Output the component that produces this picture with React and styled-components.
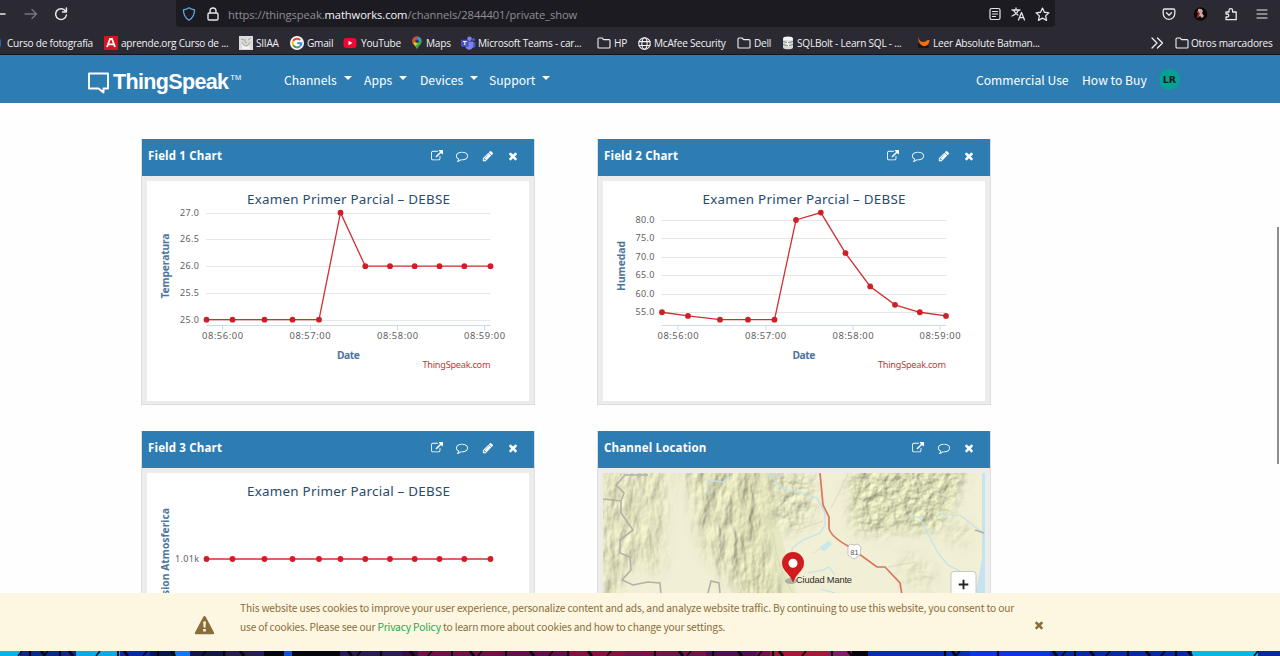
import React from 'react';
import styled, { createGlobalStyle } from 'styled-components';

const Global = createGlobalStyle`
  *, *::before, *::after { box-sizing: border-box; }
  html, body { margin: 0; padding: 0; background: #fff; overflow: hidden; }
  svg { display: block; flex: none; }
`;

const ui = '"Open Sans", "Noto Sans", sans-serif';
const source = '"Noto Sans CJK JP", "Noto Sans", sans-serif';
const chartFont = '"Noto Sans", sans-serif';

const Screen = styled.div`
  position: relative;
  display: flex;
  flex-direction: column;
  width: 1280px;
  height: 656px;
  overflow: hidden;
  background: #fefefe;
`;

/* Browser chrome */
const Toolbar = styled.div`
  display: flex;
  flex: none;
  height: 28px;
  background: #2b2a33;
`;
const ToolGroup = styled.div`
  display: flex;
  align-items: center;
  width: ${(p) => p.$w}px;
  padding-left: ${(p) => p.$left || 0}px;
  gap: ${(p) => p.$gap}px;
  color: #e8e8ec;
`;
const AddressBar = styled.div`
  display: flex;
  align-items: center;
  width: 879px;
  height: 27px;
  padding: 1px 5px 0 6px;
  border-radius: 0 0 4px 4px;
  background: #1c1b22;
  color: #e4e4e8;
`;
const Lock = styled.div`
  margin-left: 10px;
`;
const Url = styled.div`
  flex: 1;
  margin: 2px 0 0 8px;
  font: 11.2px/16px ${ui};
  letter-spacing: -0.09px;
  color: #8e8d96;
  white-space: nowrap;
  b { font-weight: 400; color: #f4f4f7; }
`;
const AddressActions = styled.div`
  display: flex;
  align-items: center;
  gap: 9px;
`;
const Bookmarks = styled.div`
  display: flex;
  flex: none;
  align-items: center;
  height: 27px;
  padding-top: 4px;
  background: #2b2a33;
  border-bottom: 1px solid #10161f;
  font: 10.1px/16px ${ui};
  letter-spacing: -0.24px;
  color: #f0f0f3;
`;
const Bookmark = styled.div`
  display: flex;
  align-items: center;
  flex: none;
  width: ${(p) => p.$w}px;
  white-space: nowrap;
`;
const Glyph = styled.span`
  display: flex;
  flex: none;
  width: ${(p) => p.$w || 17}px;
`;

/* Site navigation */
const Nav = styled.nav`
  display: flex;
  flex: none;
  align-items: center;
  height: 48px;
  padding: 1px 0 0 87px;
  background: #2e7db2;
  color: #fff;
  font: 12.15px/20px ${source};
`;
const Logo = styled.div`
  display: flex;
  align-items: center;
  width: 197px;
  padding-top: 6px;
`;
const Wordmark = styled.span`
  margin: -2px 0 0 3px;
  font: bold 21.5px/24px "Liberation Sans", Arial, sans-serif;
  letter-spacing: -0.65px;
`;
const Trademark = styled.span`
  margin: -10px 0 0 2px;
  font: 7.5px/8px "Liberation Sans", Arial, sans-serif;
`;
const NavItem = styled.div`
  display: flex;
  align-items: center;
  gap: 7px;
  flex: none;
  width: ${(p) => p.$w}px;
  white-space: nowrap;
`;
const Caret = styled.i`
  margin-top: -3px;
  border: 4px solid transparent;
  border-top-color: #fff;
  border-bottom: 0;
`;
const Avatar = styled.div`
  width: 21px;
  height: 21px;
  border-radius: 50%;
  margin-top: -1px;
  background: #08a195;
  color: #0b1c22;
  text-align: center;
  font: bold 9.5px/21px "DejaVu Sans", sans-serif;
`;

/* Channel widgets */
const Page = styled.main`
  display: grid;
  flex: none;
  align-content: start;
  grid-template-columns: 394px 394px;
  grid-auto-rows: 266px;
  gap: 26px 62px;
  height: 490px;
  padding: 36px 0 0 141px;
  overflow: hidden;
`;
const Card = styled.section`
  background: #ececec;
  border: solid #dedede;
  border-width: 0 1px 1px;
`;
const CardHeader = styled.header`
  display: flex;
  align-items: center;
  justify-content: space-between;
  height: 37px;
  padding: 0 15px 3px 6px;
  background: #2e7db2;
  color: #fff;
`;
const CardTitle = styled.h2`
  margin: 0;
  font: bold 11.5px/16px ${ui};
  letter-spacing: 0.16px;
`;
const CardTools = styled.div`
  display: flex;
  align-items: center;
  gap: 13.4px;
`;
const CardBody = styled.div`
  margin: 5px 5px 4px;
  height: 220px;
  overflow: hidden;
  background: #fff;
`;

/* Cookie notice */
const Notice = styled.aside`
  display: flex;
  flex: none;
  align-items: center;
  height: 58px;
  padding-left: 194px;
  background: #fdf7e2;
  color: #8a6d3b;
`;
const NoticeText = styled.p`
  flex: none;
  width: 779px;
  margin: -9px 0 0 25px;
  font: 10.2px/18.5px ${source};
  letter-spacing: -0.15px;
  white-space: nowrap;
  a { color: #1fa84a; }
`;
const WarnWrap = styled.div`
  padding-top: 5px;
`;
const CloseWrap = styled.div`
  margin: 6px 0 0 14px;
`;
const Wallpaper = styled.footer`
  flex: none;
  height: 5px;
`;
const ScrollThumb = styled.div`
  position: absolute;
  top: 227px;
  right: 1px;
  width: 2px;
  height: 237px;
  background: #8e8e8e;
`;

const FA = {
  link: 'M1408 928v320q0 119-84.5 203.5t-203.5 84.5h-832q-119 0-203.5-84.5t-84.5-203.5v-832q0-119 84.5-203.5t203.5-84.5h704q14 0 23 9t9 23v64q0 14-9 23t-23 9h-704q-66 0-113 47t-47 113v832q0 66 47 113t113 47h832q66 0 113-47t47-113v-320q0-14 9-23t23-9h64q14 0 23 9t9 23zm384-864v512q0 26-19 45t-45 19-45-19l-176-176-652 652q-10 10-23 10t-23-10l-114-114q-10-10-10-23t10-23l652-652-176-176q-19-19-19-45t19-45 45-19h512q26 0 45 19t19 45z',
  comment: 'M896 384q-204 0-381.5 69.5t-282 187.5-104.5 255q0 112 71.5 213.5t201.5 175.5l87 50-27 96q-24 91-70 172 152-63 275-171l43-38 57 6q69 8 130 8 204 0 381.5-69.5t282-187.5 104.5-255-104.5-255-282-187.5-381.5-69.5zm896 512q0 174-120 321.5t-326 233-450 85.5q-70 0-145-8-198 175-460 242-49 14-114 22h-5q-15 0-27-10.5t-16-27.5v-1q-3-4-.5-12t2-10 4.5-9.5l6-9 7-8.5 8-9q7-8 31-34.5t34.5-38 31-39.5 32.5-51 27-59 26-76q-157-89-247.5-220t-90.5-281q0-174 120-321.5t326-233 450-85.5 450 85.5 326 233 120 321.5z',
  pencil: 'M491 1536l91-91-235-235-91 91v107h128v128h107zm523-928q0-22-22-22-10 0-17 7l-542 542q-7 7-7 17 0 22 22 22 10 0 17-7l542-542q7-7 7-17zm-54-192l416 416-832 832h-416v-416zm683 96q0 53-37 90l-166 166-416-416 166-165q36-38 90-38 53 0 91 38l235 234q37 39 37 91z',
  times: 'M1490 1322q0 40-28 68l-136 136q-28 28-68 28t-68-28l-294-294-294 294q-28 28-68 28t-68-28l-136-136q-28-28-28-68t28-68l294-294-294-294q-28-28-28-68t28-68l136-136q28-28 68-28t68 28l294 294 294-294q28-28 68-28t68 28l136 136q28 28 28 68t-28 68l-294 294 294 294q28 28 28 68z',
};
const FaIcon = ({ name, size = 12 }) => (
  <svg width={size} height={size} viewBox="0 0 1792 1792" fill="currentColor"><path d={FA[name]} /></svg>
);

const Line = ({ w = 14, h = 14, vb = '0 0 14 14', sw = 1.3, color = 'currentColor', children }) => (
  <svg width={w} height={h} viewBox={vb} fill="none" stroke={color} strokeWidth={sw} strokeLinecap="round" strokeLinejoin="round">{children}</svg>
);

const Folder = () => (
  <Line sw={1.1}><path d="M1 11V3q0-1 1-1h3l1.6 1.6H12q1 0 1 1V11q0 1-1 1H2q-1 0-1-1Z" /></Line>
);
const bookmarkIcons = {
  aprende: (
    <svg width="14" height="14"><rect width="14" height="14" rx="1" fill="#d8151f" /><path d="M3 11 6 3h2l3 8M4.5 8.3h5" stroke="#fff" strokeWidth="1.8" fill="none" /></svg>
  ),
  siiaa: (
    <svg width="14" height="14"><rect width="14" height="14" fill="#dcdcda" /><path d="M2 3l3 1M9 4l3-2M3 6q4 8 8 0M6 3v3l2 1" stroke="#a2a2a2" fill="none" /><path d="M3 8q2 4 7 2l1 3H3z" fill="#f4f4f4" /></svg>
  ),
  gmail: (
    <svg width="14" height="14" viewBox="0 0 14 14"><circle cx="7" cy="7" r="7" fill="#fff" /><g fill="none" strokeWidth="2"><path d="M10.2 4A4.4 4.4 0 0 0 3.2 4.9" stroke="#ea4335" /><path d="M3.2 4.9a4.4 4.4 0 0 0 0 4.3" stroke="#fbbc05" /><path d="M3.2 9.2a4.4 4.4 0 0 0 6.8 1" stroke="#34a853" /><path d="M10 10.2A4.2 4.2 0 0 0 11.4 7.2H7.2" stroke="#4285f4" /></g></svg>
  ),
  youtube: (
    <svg width="14" height="14"><rect x=".5" y="2" width="13" height="10" rx="3" fill="#f20732" /><path d="m5.5 4.7 4 2.3-4 2.3z" fill="#fff" /></svg>
  ),
  maps: (
    <svg width="12" height="14" viewBox="0 0 12 14"><path d="M6 .5A4.8 4.8 0 0 0 1.2 5.2C1.2 8.5 5 10 6 13.5 7 10 10.8 8.5 10.8 5.2A4.8 4.8 0 0 0 6 .5Z" fill="#34a853" /><path d="M1.2 5.2A4.8 4.8 0 0 1 6 .5l1.5.3-5.2 6.8q-1.1-1.2-1.1-2.4Z" fill="#ea4335" /><path d="M6 .5q3 0 4.2 2.5L6.8 7 5 4.3 7.5 1Z" fill="#4285f4" /><path d="m2.3 7.6 2.2-2.5 2.8 1.8-3 3Z" fill="#fbbc04" /><circle cx="6" cy="5.2" r="1.7" fill="#1f3a5a" /></svg>
  ),
  teams: (
    <svg width="15" height="14" viewBox="0 0 15 14"><circle cx="8.5" cy="2.7" r="2.3" fill="#7b83eb" /><circle cx="12.5" cy="3.6" r="1.5" fill="#5059c9" /><path d="M10 6h4.4v4q-.5 2.5-3.3 2Z" fill="#5059c9" /><path d="M5 5.5h7V10q-.5 3.8-3.8 3.8T4.5 10Z" fill="#7b83eb" /><rect y="3.7" width="7.6" height="7" rx=".7" fill="#4b53bc" /><path d="M2 5.5h3.7M3.8 5.5V9" stroke="#fff" /></svg>
  ),
  folder: <Folder />,
  globe: (
    <Line w={13} h={13} sw={1.2}><circle cx="7" cy="7" r="6.2" /><ellipse cx="7" cy="7" rx="2.8" ry="6.2" /><path d="M1 5h12M1 9.2h12" /></Line>
  ),
  sql: (
    <svg width="12" height="14" viewBox="0 0 12 14"><path d="M1 2.500v9q0 1.800 5 1.800t5-1.800v-9Z" fill="#d5d9d6" /><ellipse cx="6" cy="2.500" rx="5" ry="2" fill="#f4f4f0" /><path d="M1 5.500q5 2.400 10 0M1 8.500q5 2.400 10 0" stroke="#7d8587" strokeWidth=".9" fill="none" /><path d="m6.500 5-2 3h2.500l-1 3" stroke="#fff" fill="none" /></svg>
  ),
  batman: (
    <svg width="14" height="14" viewBox="0 0 14 14"><path d="M1 8h9l2 4H1z" fill="#17161b" /><path d="M1 1q1.500 5 5 5 3 0 4.500-2h2q0 3-2 5-2.500 2-5.500.5Q1.500 7.500 1 1Z" fill="#f2700d" /></svg>
  ),
};

const bookmarks = [
  { icon: 'aprende', label: 'aprende.org Curso de ...', w: 135 },
  { icon: 'siiaa', label: 'SIIAA', w: 51 },
  { icon: 'gmail', label: 'Gmail', w: 53 },
  { icon: 'youtube', label: 'YouTube', w: 68, g: 18 },
  { icon: 'maps', label: 'Maps', w: 50, g: 15 },
  { icon: 'teams', label: 'Microsoft Teams - car...', w: 136 },
  { icon: 'folder', label: 'HP', w: 41 },
  { icon: 'globe', label: 'McAfee Security', w: 99, g: 16 },
  { icon: 'folder', label: 'Dell', w: 45 },
  { icon: 'sql', label: 'SQLBolt - Learn SQL - ...', w: 135, g: 15 },
  { icon: 'batman', label: 'Leer Absolute Batman...', w: 234, g: 16 },
];

const xs = [59.5, 85.5, 117.5, 145.5, 172, 193.5, 218.3, 243, 267.7, 292.5, 317.3, 343.5];
const times = [['08:56:00', 75.5], ['08:57:00', 163], ['08:58:00', 250.5], ['08:59:00', 337.5]];

function Chart({ axis, axisY, axisLen, ys, ticks, shift = 0, timeAxis = true }) {
  return (
    <svg width="382" height="220" viewBox="0 0 382 220" fontFamily={chartFont}>
      <text x={201.5 + shift} y="23" fontSize="13.400" fill="#274b6d" textAnchor="middle" textLength="203">Examen Primer Parcial – DEBSE</text>
      <g transform={`translate(${shift} 0)`}>
        {ticks.map(([label, y, len = 19]) => (
          <g key={label}>
            {timeAxis && <path d={`M59 ${Math.round(y) + 0.5}H343.500`} stroke="#e6e6e6" />}
            <text x="52" y={y + 3} fontSize="9" fill="#5f5f5f" textAnchor="end" textLength={len}>{label}</text>
          </g>
        ))}
        {timeAxis && (
          <>
            <path d="M59 144.500H343.500" stroke="#c9dbea" />
            {times.map(([t, x]) => (
              <g key={t}>
                <path d={`M${Math.floor(x) + 0.5} 144v5`} stroke="#c9dbea" />
                <text x={x} y="158" fontSize="9.400" fill="#5f5f5f" textAnchor="middle" textLength="41">{t}</text>
              </g>
            ))}
            <text x="201.500" y="178" fontSize="10.300" fontWeight="bold" fill="#4d759e" textAnchor="middle" textLength="23">Date</text>
            <text x="343.500" y="187" fontSize="9.200" fill="#cc3339" textAnchor="end" textLength="68">ThingSpeak.com</text>
          </>
        )}
        <polyline points={ys.map((y, i) => `${xs[i]},${y}`).join(' ')} fill="none" stroke="#cf3032" strokeWidth="1.300" />
        {ys.map((y, i) => <circle key={i} cx={xs[i]} cy={y} r="2.900" fill="#cd2026" />)}
      </g>
      <text transform={`translate(22 ${axisY}) rotate(-90)`} fontSize="10.300" fontWeight="bold" fill="#4d759e" textAnchor="middle" textLength={axisLen}>{axis}</text>
    </svg>
  );
}

const scale = (values, zero, unit) => values.map((v) => zero - v * unit);
const temperature = scale([0, 0, 0, 0, 0, 2, 1, 1, 1, 1, 1, 1], 138.7, 53.5);
const humidity = scale([55, 54, 53, 53, 53, 80, 82, 71, 62, 57, 55, 54], 334.2, 3.69);
const pressure = xs.map(() => 86);

function LocationMap() {
  return (
    <svg width="382" height="220" viewBox="0 0 382 220">
      <defs>
        <filter id="ridges" x="0" y="0" width="100%" height="100%" colorInterpolationFilters="sRGB">
          <feTurbulence type="fractalNoise" baseFrequency="0.075 0.032" numOctaves="4" seed="8" />
          <feDiffuseLighting surfaceScale="2.700" diffuseConstant="1.130" lightingColor="#e6e6bc"><feDistantLight azimuth="225" elevation="56" /></feDiffuseLighting>
        </filter>
        <filter id="hills" x="0" y="0" width="100%" height="100%" colorInterpolationFilters="sRGB">
          <feTurbulence type="fractalNoise" baseFrequency="0.095" numOctaves="4" seed="3" />
          <feDiffuseLighting surfaceScale="2.200" diffuseConstant="1.130" lightingColor="#e4e6bc"><feDistantLight azimuth="225" elevation="56" /></feDiffuseLighting>
        </filter>
        <filter id="soft"><feGaussianBlur stdDeviation="7" /></filter>
        <mask id="ridgeArea"><g filter="url(#soft)" fill="#fff"><path d="M78-20h94l-8 80 18 90h-22l-25-30-25-30-12-20Z" /><path d="M-20-20h84v50l-6 70-30-10L0 150h-20Z" opacity=".75" /></g></mask>
        <mask id="hillArea"><g filter="url(#soft)" fill="#fff"><path d="M245 10 260-20H370L352 30l-22 30-38-8-12 10-28-4Z" /><path d="M165 0l45-5v50l-20 15-20-10Z" opacity=".8" /><path d="M300 75l35 25-10 20-25-10ZM340 45l30 10-5 20-25-10Z" opacity=".4" /></g></mask>
      </defs>
      <rect width="382" height="220" fill="#f1efd5" />
      <path d="M118 0h48l14 70 16 60h-40L130 40Z" fill="#e3e4bb" opacity=".6" />
      <path d="M250 0h110l-20 50-35 15-55-12Z" fill="#e3e6bf" opacity=".6" />
      <g mask="url(#ridgeArea)"><rect width="382" height="220" filter="url(#ridges)" opacity=".8" /></g>
      <g mask="url(#hillArea)"><rect width="382" height="220" filter="url(#hills)" opacity=".8" /></g>
      <g fill="none" stroke="#d6d2b4" strokeWidth=".9" opacity=".8">
        <path d="M220 48l-28 10M240 40l22-22M285 94l28-5M226 68l-15 12M245 0q-8 20-17 35M0 70q14 20 12 50M170 60q5 40 20 60" />
      </g>
      <g fill="none" stroke="#c2e2ea" strokeWidth="1.200">
        <path d="M105 22V7l15 2 10-7M165 0l9 9 3 6 23 5 14 5 8 15v12l-5 8-17 7-11 8v6M307 42l10 3 10 20 8 15 10 12 12 6M337 40l8 2h12l10 8 12 9M205 100l15-3 6-3 6 8M218 116l14 4" />
      </g>
      <path d="m218 73 8-5 3 3-7 7-4-1Z" fill="#c9e7ee" />
      <path d="M379 0h3v120h-10l3-12 4-22Z" fill="#c6e3f0" />
      <path d="M45 2 22 2 13 12l8 8-3 8-18-2m18 2v12l12 17-13 10v13l10 4 1 13-9 10 11 5 15-3 12 1 1 12M105 120l3-12 8 2 1 10M372 57l9 3" fill="none" stroke="#b3b0a6" strokeWidth="1.600" />
      <path d="M217 0l3 32 6 12v11q1 8 19 18l29 21h8l15 16 2 12" fill="none" stroke="#d67762" strokeWidth="1.700" />
      <path d="m245 74 2-3 4 1 4-1 3 3-1 8-6 4-6-4Z" fill="#fff" stroke="#b5b5b5" strokeWidth=".8" />
      <text x="251.500" y="81.500" fontFamily='"Liberation Sans", sans-serif' fontSize="7.500" fill="#555" textAnchor="middle">81</text>
      <ellipse cx="188" cy="108" rx="6" ry="3" fill="#777" opacity=".5" />
      <text x="193" y="110" fontFamily='"Liberation Sans", sans-serif' fontSize="9.300" fill="#2e2e2a" textLength="56">Ciudad Mante</text>
      <path d="M190 79a11 11 0 0 0-11 11q0 5 5 10 4 4 6 9.500 2-5.500 6-9.500 5-5 5-10a11 11 0 0 0-11-11Z" fill="#d01c1f" />
      <circle cx="190" cy="90.300" r="4.500" fill="#fff" />
      <rect x="348" y="98.500" width="25" height="40" rx="3" fill="#fff" stroke="#c9c9c0" />
      <path d="M355.700 111.500h9.600M360.500 106.700v9.600" stroke="#222" strokeWidth="1.900" />
    </svg>
  );
}

function Widget({ title, tools, children }) {
  return (
    <Card>
      <CardHeader>
        <CardTitle>{title}</CardTitle>
        <CardTools>{tools.map((t) => <FaIcon key={t} name={t} />)}</CardTools>
      </CardHeader>
      <CardBody>{children}</CardBody>
    </Card>
  );
}

const bands = [
  [0, '#05b4ea'], [20, '#0a2a8c'], [76, '#0aa9e8'], [120, '#0828a8'], [150, '#08145a'], [175, '#1478f0'], [190, '#151452'], [226, '#281c58'],
  [264, '#05040d'], [284, '#1050d0'], [292, '#06050c'], [340, '#2a1a5e'], [402, '#3a0c40'], [418, '#7a0d45'], [500, '#641048'], [570, '#8a1040'], [625, '#7a1048'],
  [706, '#4c1050'], [756, '#75104a'], [770, '#a8163a'], [828, '#8a1a68'], [852, '#06050c'], [868, '#0a2cb0'], [970, '#0838e0'], [1050, '#0828a8'], [1192, '#08b6e6'], [1258, '#0828a0'],
];
const cuts = [22, 30, 41, 48, 60, 69, 100, 118, 124, 147, 158, 171, 206, 224, 240, 281, 310, 348, 361, 381, 410, 432, 452, 470, 482, 506, 530, 553, 568, 588, 611, 655, 679, 691, 713, 738, 762, 773, 779, 806, 832, 848, 862, 945, 952, 960, 998, 1053, 1066, 1075, 1090, 1110, 1128, 1146, 1165, 1176, 1188, 1258];

export default function App() {
  const all = ['link', 'comment', 'pencil', 'times'];
  return (
    <>
      <Global />
      <Screen>
        <Toolbar>
          <ToolGroup $w={176} $gap={16}>
            <Line w={8} vb="0 0 8 14" sw={1.500}><path d="M0 7h5" /></Line>
            <Line color="#777680"><path d="M1 7h11M8 2.500 12.500 7 8 11.500" /></Line>
            <Line sw={1.500}><path d="M11.800 4.500A5.400 5.400 0 1 0 12.400 8M12.400 1v4H8.500" /></Line>
          </ToolGroup>
          <AddressBar>
            <Line color="#5fa8dc" sw={1.300}><path d="M7 .8q2.500 1.700 5.600 2Q12.500 10 7 13.200 1.500 10 1.400 2.800 4.500 2.500 7 .8Z" /></Line>
            <Lock><Line sw={1.400}><rect x="2" y="6" width="10" height="7" rx="1.200" /><path d="M4 6V4a3 3 0 0 1 6 0v2" /></Line></Lock>
            <Url>https://thingspeak.<b>mathworks.com</b>/channels/2844401/private_show</Url>
            <AddressActions>
              <Line sw={1.200}><rect x="2" y="1.500" width="10" height="11" rx="1.500" /><path d="M4.500 4.500h5M4.500 7h5M4.500 9.500h3" /></Line>
              <Line w={15} vb="0 0 15 14" sw={1.300}><path d="M1 3h8M5 1v2M7.500 3Q6 7 1 9M2.800 3.500Q4 6.500 7 8M7.500 13l3-7.500 3 7.500M8.500 10.700h4" /></Line>
              <Line w={15} h={15} sw={1.200}><path d="m7 1 1.800 3.900 4.200.5-3.100 2.900.9 4.200L7 10.400l-3.800 2.100.9-4.200L1 5.400l4.200-.5Z" /></Line>
            </AddressActions>
          </AddressBar>
          <ToolGroup $w={225} $left={107} $gap={16.500}>
            <Line sw={1.300}><path d="M2.500 2h9q1.300 0 1.300 1.300V6.500a5.800 5.800 0 0 1-11.600 0V3.300Q1.200 2 2.500 2ZM4.500 5.800 7 8.200l2.500-2.400" /></Line>
            <svg width="15" height="14" viewBox="0 0 15 14"><circle cx="7.500" cy="7" r="6.800" fill="#0d0708" /><path d="M5 2q4-1 5 2l-1 2 2 3-2 2-2-2-3 2 1-4Z" fill="#caa59d" /><path d="m4 4 2 3-2 4" stroke="#8d2029" strokeWidth="1.500" fill="none" /></svg>
            <Line sw={1.300}><path d="M2 5h3V3.500a1.800 1.800 0 0 1 3.600 0V5h3.600v7.700H2V10h1.300a1.500 1.500 0 0 0 0-3H2Z" /></Line>
            <Line sw={1.200}><path d="M2 3h10M2 7h10M2 11h10" /></Line>
          </ToolGroup>
        </Toolbar>
        <Bookmarks>
          <Bookmark $w={104}>
            <Glyph $w={7}><svg width="2" height="10"><path d="M0 0q2 5 0 10Z" fill="#2d6bb5" /></svg></Glyph>Curso de fotografía
          </Bookmark>
          {bookmarks.map((b, i) => (
            <Bookmark key={i} $w={b.w}><Glyph $w={b.g}>{bookmarkIcons[b.icon]}</Glyph>{b.label}</Bookmark>
          ))}
          <Bookmark $w={24}><Line><path d="m1 2 5 5-5 5M6.500 2l5 5-5 5" /></Line></Bookmark>
          <Bookmark $w={100}><Glyph $w={16}><Folder /></Glyph>Otros marcadores</Bookmark>
        </Bookmarks>

        <Nav>
          <Logo>
            <Line w={23} h={23} vb="0 0 23 23" sw={1.900}><path d="M2 2.500h19v15h-4.500V21.500L11.500 17.500H2Z" /></Line>
            <Wordmark>ThingSpeak</Wordmark>
            <Trademark>TM</Trademark>
          </Logo>
          <NavItem $w={80}>Channels <Caret /></NavItem>
          <NavItem $w={56}>Apps <Caret /></NavItem>
          <NavItem $w={69}>Devices <Caret /></NavItem>
          <NavItem $w={487}>Support <Caret /></NavItem>
          <NavItem $w={106}>Commercial Use</NavItem>
          <NavItem $w={77}>How to Buy</NavItem>
          <Avatar>LR</Avatar>
        </Nav>

        <Page>
          <Widget title="Field 1 Chart" tools={all}>
            <Chart axis="Temperatura" axisY={85} axisLen={65} ys={temperature}
              ticks={[['27.0', 31.5], ['26.5', 58], ['26.0', 85], ['25.5', 112], ['25.0', 138.5]]} />
          </Widget>
          <Widget title="Field 2 Chart" tools={all}>
            <Chart axis="Humedad" axisY={85} axisLen={50} ys={humidity} shift={-0.5}
              ticks={[['80.0', 38.5], ['75.0', 57], ['70.0', 75.5], ['65.0', 94], ['60.0', 112.5], ['55.0', 131]]} />
          </Widget>
          <Widget title="Field 3 Chart" tools={all}>
            <Chart axis="Presion Atmosferica" axisY={87} axisLen={104} ys={pressure} timeAxis={false} ticks={[['1.01k', 86, 24]]} />
          </Widget>
          <Widget title="Channel Location" tools={['link', 'comment', 'times']}>
            <LocationMap />
          </Widget>
        </Page>

        <Notice>
          <WarnWrap>
            <svg width="21" height="20" viewBox="0 0 21 20"><path d="M10.500 1q.8 0 1.200.8l8.300 15.700q.8 1.700-1 1.700H2q-1.800 0-1-1.700L9.300 1.800q.4-.8 1.200-.8Z" fill="#8a6d3b" /><path d="M9.200 6.500h2.700l-.4 6H9.600ZM9.200 14h2.600v2.500H9.200Z" fill="#fdf7e2" /></svg>
          </WarnWrap>
          <NoticeText>
            This website uses cookies to improve your user experience, personalize content and ads, and analyze website traffic. By continuing to use this website, you consent to our<br />
            use of cookies. Please see our <a>Privacy Policy</a> to learn more about cookies and how to change your settings.
          </NoticeText>
          <CloseWrap><FaIcon name="times" size={12} /></CloseWrap>
        </Notice>
        <Wallpaper>
          <svg width="1280" height="5">
            {bands.map(([x, c], i) => <rect key={x} x={x} width={(bands[i + 1]?.[0] ?? 1280) - x} height="5" fill={c} />)}
            {cuts.map((x, i) => <path key={x} d={`M${x} 0l${(i % 3 - 1) * 4} 5`} stroke="#04040c" strokeWidth={1.500 + (i % 3) * 0.6} />)}
          </svg>
        </Wallpaper>
        <ScrollThumb />
      </Screen>
    </>
  );
}
